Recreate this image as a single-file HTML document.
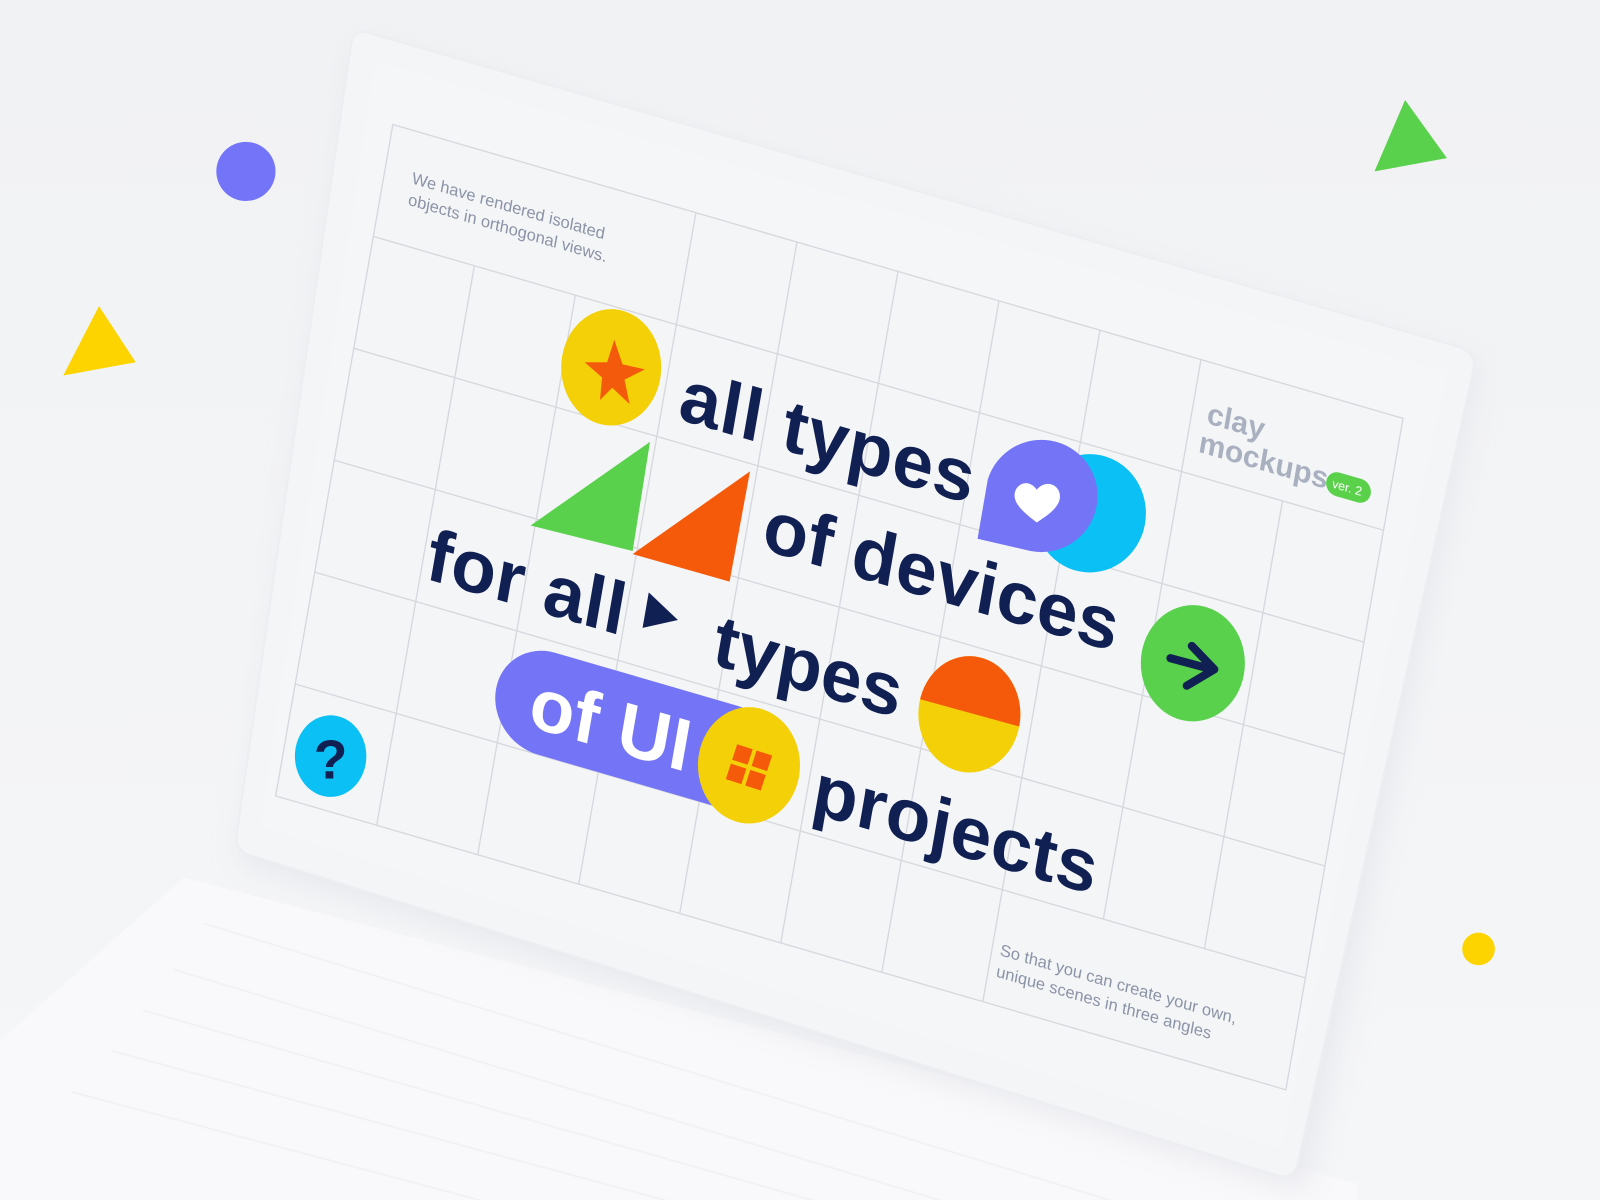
<!DOCTYPE html>
<html><head><meta charset="utf-8"><style>
html,body{margin:0;padding:0;width:1600px;height:1200px;overflow:hidden;background:#f2f3f5}
svg{display:block}
</style></head><body>
<svg width="1600" height="1200" viewBox="0 0 1600 1200" xmlns="http://www.w3.org/2000/svg">
<defs>
<linearGradient id="bg" x1="0" y1="0" x2="0" y2="1"><stop offset="0" stop-color="#f1f2f4"/><stop offset="1" stop-color="#f5f6f8"/></linearGradient>
<filter id="sh" x="-10%" y="-10%" width="120%" height="130%"><feGaussianBlur stdDeviation="14"/></filter>
</defs>
<rect width="1600" height="1200" fill="url(#bg)"/>
<g transform="scale(1.0204)">
<!-- keyboard base -->
<polygon points="180,860 1330,1160 1330,1200 0,1200 0,1020" fill="#f9f9fb"/>
<g stroke="#f2f2f5" stroke-width="2" fill="none">
<path d="M200,905 L1100,1180 M170,950 L1000,1200 M140,990 L880,1200 M110,1030 L740,1200 M70,1070 L560,1200"/>
</g>
<!-- lid shadow -->
<polygon points="350,40 1450,355 1280,1170 235,845" fill="#dcdde3" filter="url(#sh)" opacity="0.5"/>
<!-- lid -->
<path d="M360,32 L1430,340 Q1447,346 1444,362 L1272,1140 Q1268,1156 1252,1152 L245,838 Q229,833 232,817 L344,44 Q347,28 360,32 Z" fill="#f4f5f7" stroke="#eceef1" stroke-width="2"/>
<polygon points="368,60 1418,365 1255,1125 255,810" fill="#f5f6f8"/>
<g transform="matrix(0.99 0.288 -0.174 0.997 385 122)" font-family="'Liberation Sans',sans-serif">
<rect x="0" y="0" width="1000" height="660" fill="#f4f5f7" stroke="#d6d8de" stroke-width="1.3"/>
<g stroke="#d6d8de" stroke-width="1.3">
<line x1="0" y1="110" x2="1000" y2="110"/>
<line x1="0" y1="220" x2="1000" y2="220"/>
<line x1="0" y1="330" x2="1000" y2="330"/>
<line x1="0" y1="440" x2="1000" y2="440"/>
<line x1="0" y1="550" x2="1000" y2="550"/>
<line x1="100" y1="110" x2="100" y2="660"/>
<line x1="200" y1="110" x2="200" y2="660"/>
<line x1="300" y1="0" x2="300" y2="660"/>
<line x1="400" y1="0" x2="400" y2="660"/>
<line x1="500" y1="0" x2="500" y2="660"/>
<line x1="600" y1="0" x2="600" y2="660"/>
<line x1="700" y1="0" x2="700" y2="660"/>
<line x1="800" y1="0" x2="800" y2="550"/>
<line x1="900" y1="110" x2="900" y2="550"/>
</g>
<text x="27" y="50" font-size="16" fill="#8b93a6">We have rendered isolated</text>
<text x="27" y="71" font-size="16" fill="#8b93a6">objects in orthogonal views.</text>
<text x="815" y="58" font-size="29" font-weight="bold" fill="#a9b0c0">clay</text>
<text x="812" y="87" font-size="29" font-weight="bold" fill="#a9b0c0">mockups</text>
<rect x="938" y="68" width="44" height="23" rx="11.5" fill="#5bd14b"/>
<text x="944" y="84" font-size="12" fill="#fff">ver. 2</text>
<text x="708" y="612" font-size="16" fill="#8b93a6">So that you can create your own,</text>
<text x="708" y="633" font-size="16" fill="#8b93a6">unique scenes in three angles</text>
<g font-size="71" font-weight="bold" fill="#112052">
<text x="316" y="198" textLength="290">all types</text>
<text x="416" y="297" textLength="350">of devices</text>
<text x="104" y="416" textLength="195">for all</text>
<text x="388" y="418" textLength="185">types</text>
<text x="506" y="530" textLength="280">projects</text>
</g>
<polygon points="318,368 350,386 318,403" fill="#112052"/>
<rect x="190" y="450" width="280" height="100" rx="50" fill="#7474f6"/>
<text x="225" y="526" font-size="71" font-weight="bold" fill="#fff">of UI</text>
</g>
<!-- shapes in screen coords -->
<ellipse cx="599" cy="360" rx="49" ry="57" fill="#f3d008"/>
<polygon points="602,333 610,357 632,362 612,372 617,396 600,380 588,392 590,370 573,355 595,355" fill="#f45a0b"/>
<polygon points="520,515 637,433 620,540" fill="#5ad14c"/>
<polygon points="620,543 735,462 715,570" fill="#f45a0a"/>
<ellipse cx="1068" cy="503" rx="55" ry="58" fill="#0bc0f4"/>
<path d="M958,528 L968,470 A55,55 0 1 1 1010,540 Z" fill="#7474f6"/>
<path d="M1016,512 C1000,500 990,490 996,479 C1002,470 1012,473 1016,480 C1022,472 1034,472 1038,482 C1042,494 1030,503 1016,512 Z" fill="#fff"/>
<ellipse cx="1169" cy="650" rx="51" ry="57" fill="#5ad14c"/>
<path d="M1147,645 L1188,656 M1168,633 L1190,656 L1163,672" stroke="#112052" stroke-width="8" fill="none" stroke-linecap="round" stroke-linejoin="round"/>
<clipPath id="hc"><ellipse cx="950" cy="700" rx="50" ry="57"/></clipPath>
<g clip-path="url(#hc)"><rect x="890" y="630" width="120" height="140" fill="#f3d008"/><polygon points="890,630 1010,630 1010,715 890,682" fill="#f45a0a"/></g>
<ellipse cx="734" cy="750" rx="50" ry="57" fill="#f3d008"/>
<g transform="rotate(18 734 752)" fill="#f45a0a"><rect x="716" y="734" width="16" height="16"/><rect x="736" y="734" width="16" height="16"/><rect x="716" y="754" width="16" height="16"/><rect x="736" y="754" width="16" height="16"/></g>
<ellipse cx="324" cy="741" rx="35" ry="40" fill="#0bc0f4"/>
<text x="324" y="763" text-anchor="middle" font-family="'Liberation Sans',sans-serif" font-weight="bold" font-size="54" fill="#112052">?</text>
<!-- decor -->
<circle cx="241" cy="168" r="29" fill="#7474f8"/>
<polygon points="62,368 97,300 133,355" fill="#fdd400"/>
<polygon points="1347,168 1377,98 1418,155" fill="#5ad14c"/>
<circle cx="1449" cy="930" r="16" fill="#fdd400"/>
</g>
</svg>
</body></html>
